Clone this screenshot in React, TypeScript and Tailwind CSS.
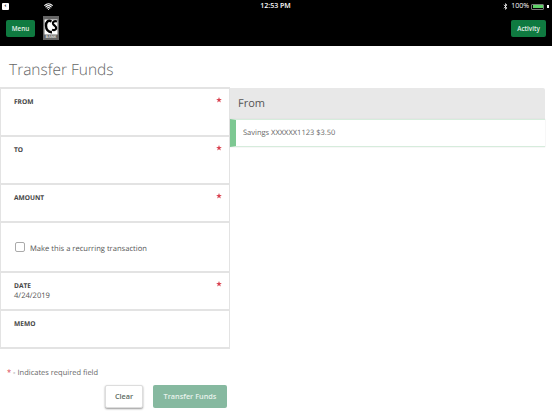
import { Bluetooth, Wifi } from 'lucide-react';

const font = { fontFamily: '"Open Sans", sans-serif' };

function Star() {
  return (
    <svg width="6" height="6" viewBox="0 0 10 10" className="mt-[0px]">
      <path d="M5 0 L6.2 3.4 L9.8 3.4 L6.9 5.6 L8 9.2 L5 7 L2 9.2 L3.1 5.6 L.2 3.4 L3.8 3.4 Z" fill="#d9414f" />
    </svg>
  );
}

function Field({ label, value, required, rowClass }: { label: string; value?: string; required?: boolean; rowClass: string }) {
  return (
    <div className={`border-b-2 border-[#e3e3e3] pl-[13px] pr-[7px] pt-[8px] ${rowClass}`}>
      <div className="flex items-start justify-between">
        <span className="text-[6.6px] leading-[10px] font-bold text-[#444]">{label}</span>
        {required && <Star />}
      </div>
      {value && <div className="text-[7.6px] leading-[10px] text-[#555]">{value}</div>}
    </div>
  );
}

export default function App() {
  return (
    <div className="w-[552px] h-[414px] overflow-hidden bg-white [text-rendering:geometricPrecision]" style={font}>
      <header className="h-[46px] bg-black text-white">
        <div className="flex h-[13px] items-center pl-[2px] pr-[3px]">
          <div className="flex flex-1 items-center gap-[35px]">
            <div className="flex h-[7px] w-[7px] items-center justify-center rounded-[1px] bg-white text-[5px] font-bold leading-none text-black">‹</div>
            <Wifi size={9} strokeWidth={3} className="text-white" />
          </div>
          <span className="text-[7px] font-semibold leading-none">12:53 PM</span>
          <div className="flex flex-1 items-center justify-end gap-[2px]">
            <Bluetooth size={7} strokeWidth={2.5} />
            <span className="text-[7px] leading-none">100%</span>
            <div className="flex h-[6px] w-[13px] rounded-[1px] border border-[#777] p-[0.5px]">
              <div className="flex-1 bg-[#5fd068]" />
            </div>
            <span className="ml-[1px] h-[3px] w-[2px] bg-white" />
          </div>
        </div>
        <div className="flex items-start justify-between pl-[6px] pr-[6px]">
          <div className="flex items-start gap-[8px]">
            <button className="mt-[7px] h-[17px] w-[29px] rounded-[2px] bg-[#0f7a40] text-[6.3px] font-semibold text-[#e4efe8]">Menu</button>
            <svg width="16" height="24" viewBox="0 0 16 24" className="mt-[3px]">
              <rect width="16" height="24" fill="#666" />
              <rect x="1.5" y="3.5" width="13" height="15" fill="#fff" />
              <path d="M8.5 5.5 C5 3.6 3 6 3 9.5 C3 13 5 16.5 9 16.2" fill="none" stroke="#000" strokeWidth="2.4" />
              <path d="M14 5.6 C11.6 4.4 9.4 5.6 10 7.8 C10.6 9.8 13.4 10 13.2 12.2 C13 14.2 10.8 14.6 9 13.6" fill="none" stroke="#000" strokeWidth="2.2" />
              <text x="8" y="22.4" textAnchor="middle" fontSize="3.8" fontWeight="700" fill="#ddd">BANK</text>
            </svg>
          </div>
          <button className="mt-[7px] h-[17px] w-[35px] rounded-[2px] bg-[#0f7a40] text-[6.3px] font-semibold text-[#e4efe8]">Activity</button>
        </div>
      </header>

      <h1 className="pl-[9px] pt-[12px] text-[15.5px] font-light leading-[22px] text-[#666]">Transfer Funds</h1>

      <div className="mt-[7px] flex items-start">
        <div className="w-[230px] border-x border-t-2 border-[#e3e3e3]">
          <Field label="FROM" required rowClass="h-[48px]" />
          <Field label="TO" required rowClass="h-[48px]" />
          <Field label="AMOUNT" required rowClass="h-[38px]" />
          <div className="flex h-[50px] items-center gap-[5px] border-b-2 border-[#e3e3e3] pl-[14px]">
            <span className="h-[10px] w-[10px] rounded-[2px] border border-[#aaa] bg-white" />
            <span className="mt-[3px] text-[7.6px] leading-[12px] text-[#555]">Make this a recurring transaction</span>
          </div>
          <Field label="DATE" value="4/24/2019" required rowClass="h-[38px]" />
          <Field label="MEMO" rowClass="h-[38px]" />
        </div>
        <div className="mt-[1px] w-[315px]">
          <div className="flex h-[31px] items-center rounded-tr-[2px] bg-[#e8e8e8] pl-[8px] pt-[2px] text-[11px] text-[#555]">From</div>
          <div className="flex h-[28px] items-center border-y border-[#d6ecdc] border-l-[6px] border-l-[#7dc892] pl-[7px] pt-[2px] text-[7.5px] text-[#666] shadow-[0_0_1px_#ccc]">
            Savings XXXXXX1123 $3.50
          </div>
        </div>
      </div>

      <div className="mt-[18px] pl-[7px] text-[7.5px] leading-[12px] text-[#666]">
        <span className="text-[#d9414f]">*</span> - Indicates required field
      </div>
      <div className="mt-[6px] flex w-[227px] justify-end gap-[10px]">
        <button className="h-[23px] w-[38px] rounded-[2px] border border-[#ddd] bg-white text-[7.3px] font-semibold text-[#5c6b63] shadow-[0_1px_2px_#999]">Clear</button>
        <button className="h-[23px] w-[74px] rounded-[2px] bg-[#86b9a0] text-[7.3px] font-semibold text-[#e8f2ec]">Transfer Funds</button>
      </div>
    </div>
  );
}
